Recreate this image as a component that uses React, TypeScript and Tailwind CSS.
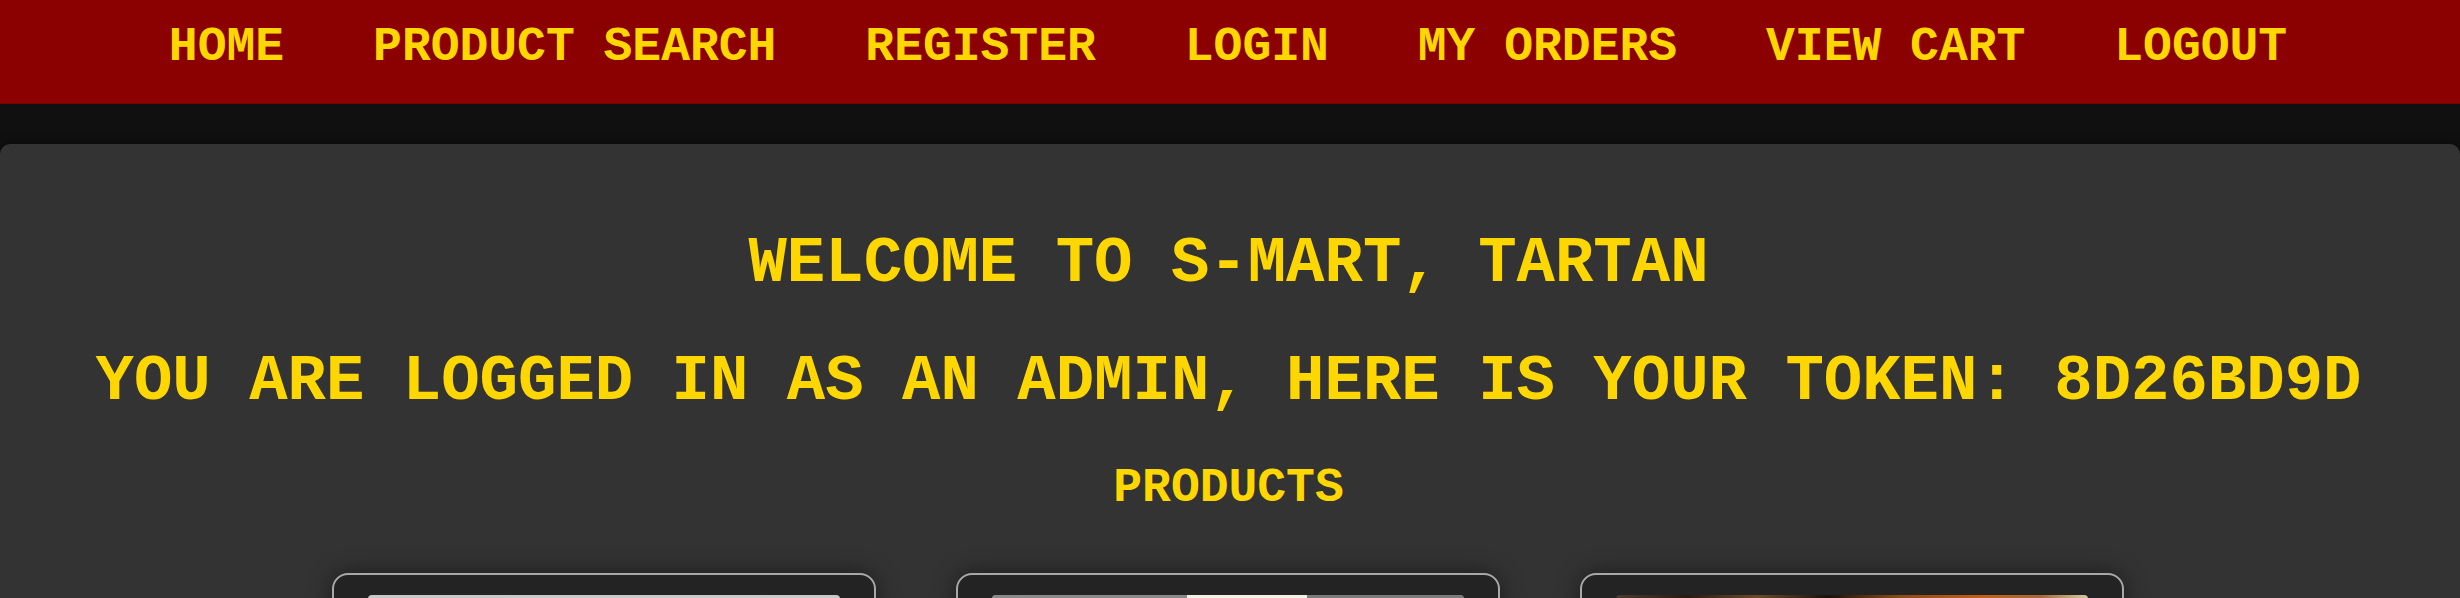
import React from 'react';

const navItems = ['HOME', 'PRODUCT SEARCH', 'REGISTER', 'LOGIN', 'MY ORDERS', 'VIEW CART', 'LOGOUT'];

const ProductCard: React.FC<{ children: React.ReactNode }> = ({ children }) => (
  <div className="w-[544px] shrink-0 rounded-[16px] border-2 border-[#a8a8a8] bg-[#232323] p-[20px] shadow-[0_0_24px_rgba(0,0,0,0.45)]">
    <div className="mx-auto h-[300px] w-[472px] overflow-hidden rounded-[4px]">{children}</div>
  </div>
);

const App: React.FC = () => {
  return (
    <div className="min-h-screen bg-[#101010] font-['Liberation_Mono',monospace] font-bold text-[#ffd700]">
      {/* Navigation */}
      <nav className="h-[104px] bg-[#8b0000] pt-[20px] border-b border-[#7a0000]">
        <ul className="flex justify-center gap-[89px] pr-[4px] text-[48px] leading-[54px]">
          {navItems.map((item) => (
            <li key={item} className="whitespace-pre">
              {item}
            </li>
          ))}
        </ul>
      </nav>

      {/* Main panel */}
      <div className="mt-[40px] rounded-[10px] bg-[#333333] pt-[40px] pb-[40px] pl-[40px] pr-[43px] text-center shadow-[0_0_10px_rgba(0,0,0,0.6)]">
        <h1 className="mt-[44px] text-[64px] leading-[72.5px]">WELCOME TO S-MART, TARTAN</h1>
        <h1 className="mt-[45px] text-[64px] leading-[72.5px] whitespace-pre">
          YOU ARE LOGGED IN AS AN ADMIN, HERE IS YOUR TOKEN: 8D26BD9D
        </h1>
        <h2 className="mt-[43px] text-[48px] leading-[54.4px]">PRODUCTS</h2>

        <div className="mt-[58px] flex justify-center gap-[80px] pr-[1px]">
          <ProductCard>
            <div className="h-full w-full bg-[linear-gradient(180deg,#c9c9c9_0%,#9a9a9a_30%,#6d6d6d_100%)]" />
          </ProductCard>
          <ProductCard>
            <div className="flex h-full w-full bg-[#6f6f6f]">
              <div className="w-[195px] bg-[linear-gradient(180deg,#8a8a8a,#5c5c5c)]" />
              <div className="w-[120px] bg-[#f2f1e4]" />
              <div className="flex-1 bg-[linear-gradient(180deg,#7c7c7c,#505050)]" />
            </div>
          </ProductCard>
          <ProductCard>
            <div className="h-full w-full bg-[linear-gradient(90deg,#4a3a30_0%,#2a1a12_15%,#6a4a2a_30%,#1a120c_45%,#8a4a1a_60%,#c0601a_78%,#a06a3a_90%,#d8c8a0_100%)]" />
          </ProductCard>
        </div>
      </div>
    </div>
  );
};

export default App;
